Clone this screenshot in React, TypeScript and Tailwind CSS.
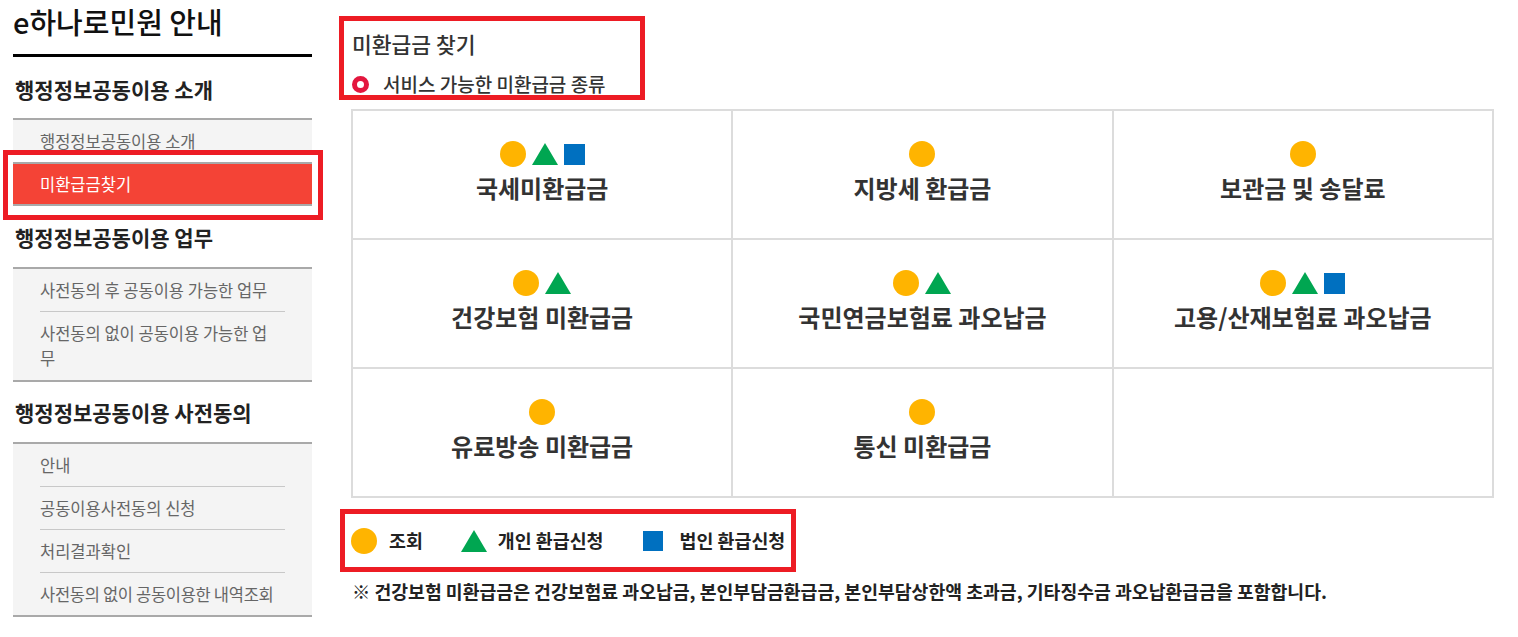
import React from 'react';

type Shape = 'c' | 't' | 's';

interface Refund {
    icons: Shape[];
    label: string;
}

const refunds: (Refund | null)[] = [
    { icons: ['c', 't', 's'], label: '국세미환급금' },
    { icons: ['c'], label: '지방세 환급금' },
    { icons: ['c'], label: '보관금 및 송달료' },
    { icons: ['c', 't'], label: '건강보험 미환급금' },
    { icons: ['c', 't'], label: '국민연금보험료 과오납금' },
    { icons: ['c', 't', 's'], label: '고용/산재보험료 과오납금' },
    { icons: ['c'], label: '유료방송 미환급금' },
    { icons: ['c'], label: '통신 미환급금' },
    null,
];

function Circle() {
    return <span className="block w-[26px] h-[26px] rounded-full bg-[#ffb400]" />;
}

function Triangle() {
    return (
        <svg width="26" height="22" viewBox="0 0 26 22" className="block">
            <polygon points="13,0 26,22 0,22" fill="#00a651" />
        </svg>
    );
}

function Square() {
    return <span className="block w-[21px] h-[21px] bg-[#0070c0]" />;
}

function ShapeIcon({ shape }: { shape: Shape }) {
    if (shape === 'c') return <Circle />;
    if (shape === 't') return <Triangle />;
    return <Square />;
}

function Sidebar() {
    return (
        <aside className="w-[299px] shrink-0 ml-[13px]">
            {/* Title */}
            <h1 className="pt-[3px] pb-[15px] border-b-[3px] border-black text-[29px] leading-[36px] font-medium text-[#111]">
                e하나로민원 안내
            </h1>

            {/* 소개 */}
            <h2 className="mt-[18px] px-[2px] text-[21px] leading-[28px] font-bold text-[#222]">
                행정정보공동이용 소개
            </h2>
            <ul className="mt-[15px] bg-[#f4f4f4] border-t-2 border-[#a9a9a9] text-[16.5px] text-[#666]">
                <li className="px-[27px] py-[9px] leading-[24px]">행정정보공동이용 소개</li>
                <li className="relative">
                    <div className="absolute -left-[10px] -right-[11px] -top-[12px] -bottom-[14px] border-[5px] border-[#ed1c24] bg-white" />
                    <div className="relative z-10 bg-[#f44336] border-y-2 border-[#a9a9a9] px-[27px] py-[8px] leading-[24px] text-white">
                        미환급금찾기
                    </div>
                </li>
            </ul>

            {/* 업무 */}
            <h2 className="mt-[17px] px-[2px] text-[21px] leading-[28px] font-bold text-[#222]">
                행정정보공동이용 업무
            </h2>
            <ul className="mt-[16px] bg-[#f4f4f4] border-y-2 border-[#a9a9a9] px-[27px] text-[16.5px] text-[#666]">
                <li className="py-[9px] leading-[24px]">사전동의 후 공동이용 가능한 업무</li>
                <li className="py-[9px] pr-[8px] leading-[25px] border-t border-[#c8c8c8]">
                    사전동의 없이 공동이용 가능한 업무
                </li>
            </ul>

            {/* 사전동의 */}
            <h2 className="mt-[16px] px-[2px] text-[21px] leading-[28px] font-bold text-[#222]">
                행정정보공동이용 사전동의
            </h2>
            <ul className="mt-[16px] bg-[#f4f4f4] border-y-2 border-[#a9a9a9] px-[27px] text-[16.5px] text-[#666]">
                <li className="py-[9px] leading-[24px]">안내</li>
                <li className="py-[9px] leading-[24px] border-t border-[#c8c8c8]">공동이용사전동의 신청</li>
                <li className="py-[9px] leading-[24px] border-t border-[#c8c8c8]">처리결과확인</li>
                <li className="py-[9px] leading-[24px] border-t border-[#c8c8c8] whitespace-nowrap tracking-[-0.3px]">
                    사전동의 없이 공동이용한 내역조회
                </li>
            </ul>
        </aside>
    );
}

export default function App() {
    return (
        <div className="flex w-full h-[637px] overflow-hidden bg-white font-['Noto_Sans_CJK_KR',sans-serif]">
            <Sidebar />

            <main className="ml-[27px] pt-[16px]">
                {/* Heading */}
                <div className="w-[306px] h-[84px] border-[5px] border-[#ed1c24] pl-[8px] pt-[9px]">
                    <h3 className="text-[21.5px] leading-[28px] font-medium text-[#333]">미환급금 찾기</h3>
                    <div className="mt-[15px] flex items-center gap-[14px]">
                        <span className="block w-[17px] h-[17px] rounded-full border-[5px] border-[#e3173e] bg-white" />
                        <span className="text-[19px] leading-[22px] font-medium text-[#333]">
                            서비스 가능한 미환급금 종류
                        </span>
                    </div>
                </div>

                {/* Refund grid */}
                <div className="mt-[9px] ml-[12px] w-[1143px] grid grid-cols-3 gap-[2px] p-[2px] bg-[#dcdcdc]">
                    {refunds.map((item, i) => (
                        <div key={i} className="h-[127px] pb-[6px] bg-white flex flex-col items-center justify-center">
                            {item && (
                                <>
                                    <div className="flex items-center gap-[6px] h-[26px]">
                                        {item.icons.map((s) => (
                                            <ShapeIcon key={s} shape={s} />
                                        ))}
                                    </div>
                                    <p className="mt-[7px] text-[24px] leading-[28px] font-bold text-[#333]">
                                        {item.label}
                                    </p>
                                </>
                            )}
                        </div>
                    ))}
                </div>

                {/* Legend */}
                <div className="mt-[11px] ml-[1px] w-[456px] h-[63px] border-[5px] border-[#ed1c24] pl-[6px] flex items-center text-[18.4px] font-bold text-[#222]">
                    <Circle />
                    <span className="ml-[12px]">조회</span>
                    <span className="ml-[38px]">
                        <Triangle />
                    </span>
                    <span className="ml-[11px]">개인 환급신청</span>
                    <span className="ml-[39px] block w-[20px] h-[20px] bg-[#0070c0]" />
                    <span className="ml-[17px]">법인 환급신청</span>
                </div>

                {/* Note */}
                <p className="mt-[7px] ml-[13px] text-[18.3px] leading-[24px] font-bold text-[#222] whitespace-nowrap">
                    ※ 건강보험 미환급금은 건강보험료 과오납금, 본인부담금환급금, 본인부담상한액 초과금, 기타징수금 과오납환급금을 포함합니다.
                </p>
            </main>
        </div>
    );
}
